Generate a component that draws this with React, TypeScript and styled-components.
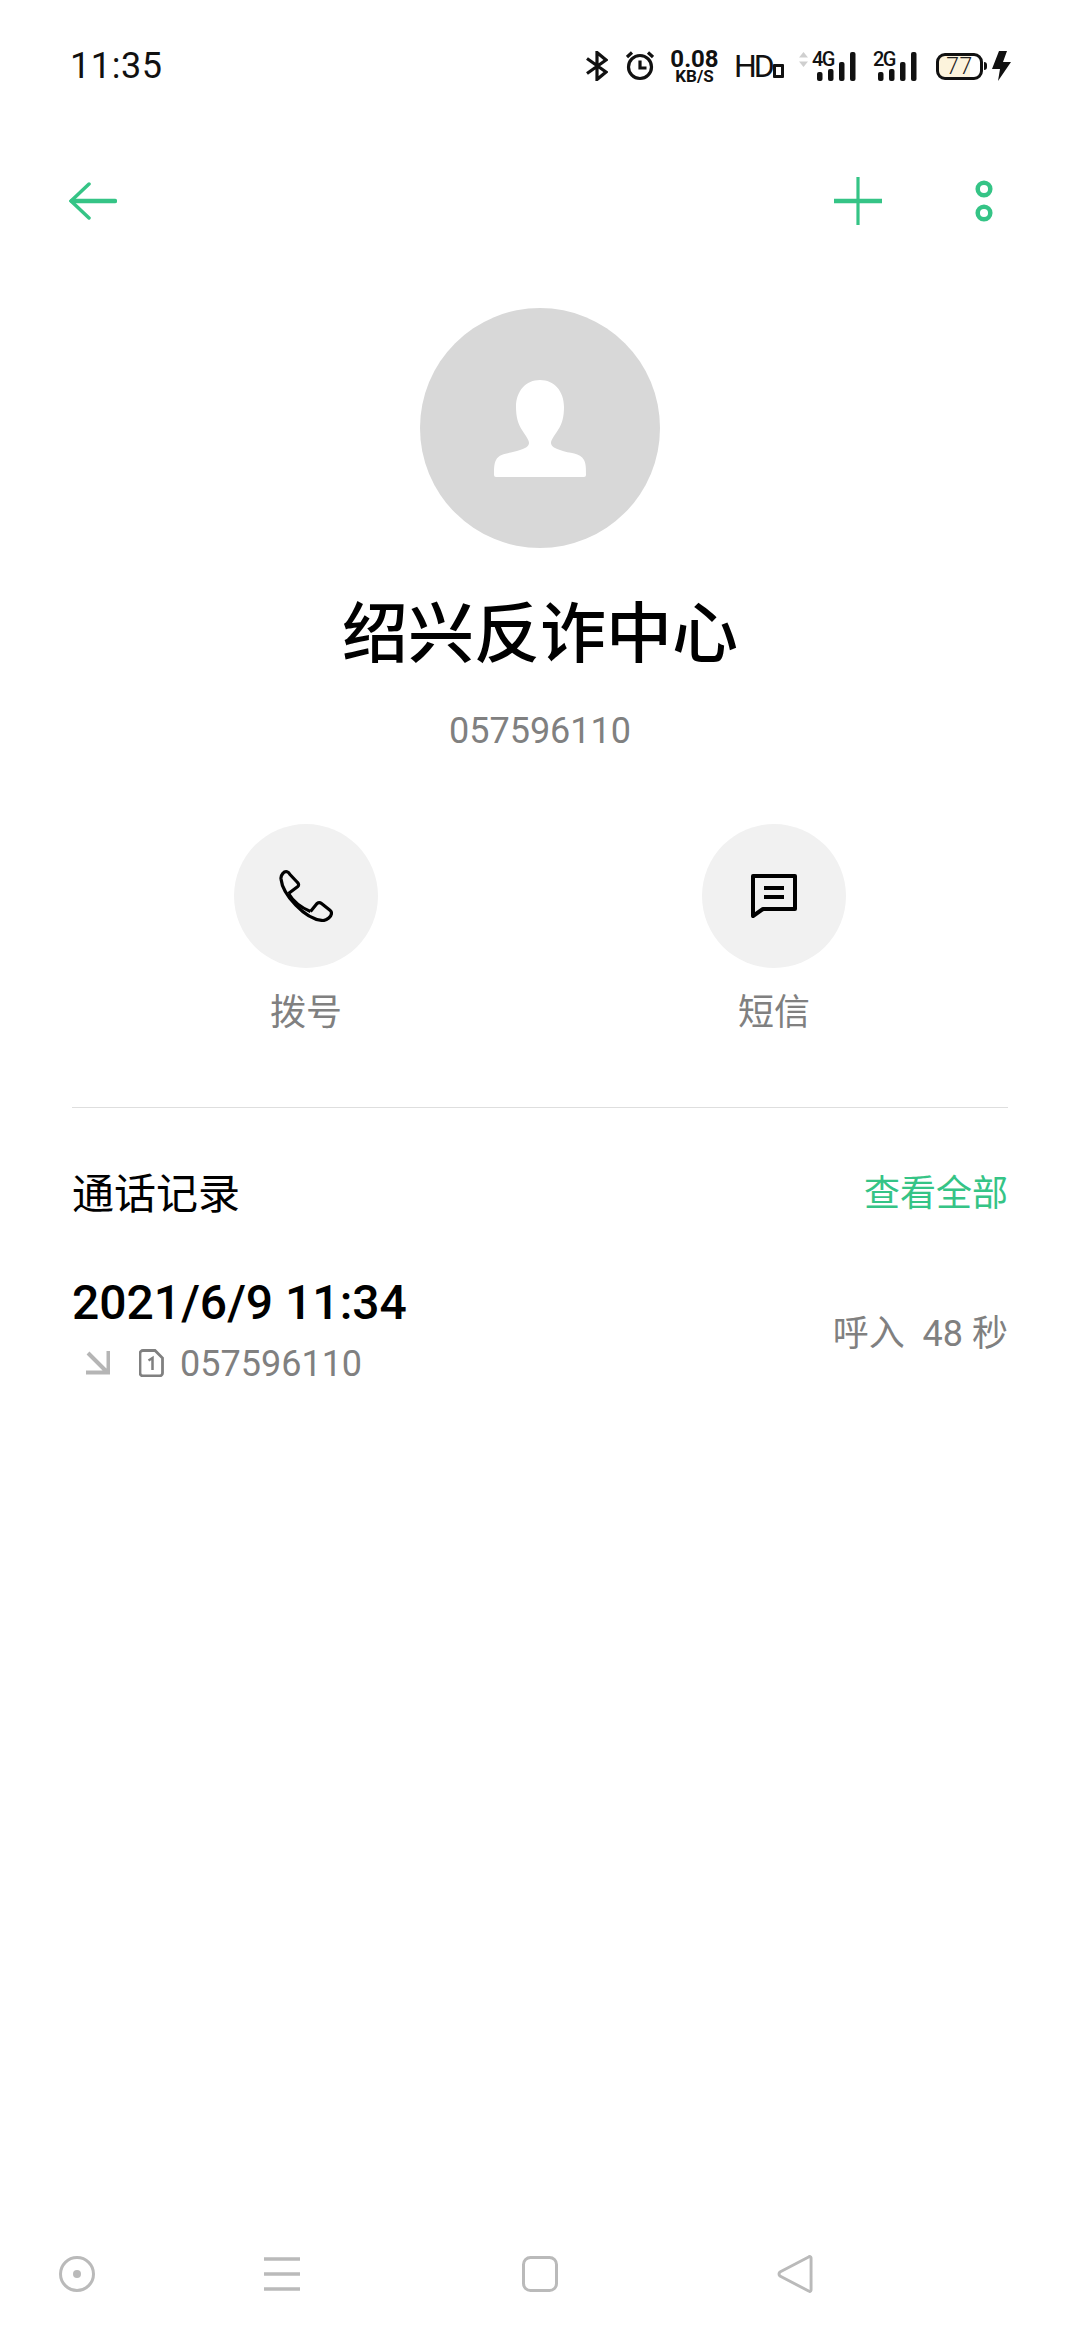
import styled, { createGlobalStyle } from 'styled-components'

const green = '#35c486'
const gray = '#808080'
const navGray = '#bababa'

const GlobalStyle = createGlobalStyle`
  html, body {
    margin: 0;
    padding: 0;
    background: #fff;
  }
  * {
    box-sizing: border-box;
  }
`

const Page = styled.div`
  display: flex;
  flex-direction: column;
  width: 1080px;
  height: 2340px;
  background: #fff;
  overflow: hidden;
  font-family: Roboto, 'Noto Sans CJK SC', sans-serif;
`

const StatusBar = styled.div`
  display: flex;
  align-items: center;
  justify-content: space-between;
  height: 132px;
  padding: 0 69px 0 70px;
`

const Time = styled.span`
  font-size: 36px;
  letter-spacing: 0.6px;
  color: #111;
`

const StatusIcons = styled.div`
  display: flex;
  align-items: center;
`

const StatusItem = styled.div<{ $gap: number }>`
  display: flex;
  margin-left: ${(p) => p.$gap}px;
`

const Speed = styled.div`
  display: flex;
  flex-direction: column;
  align-items: center;
  width: 47px;
  color: #111;
  font-weight: 700;
`

const SpeedValue = styled.span`
  font-size: 24px;
  line-height: 20px;
`

const SpeedUnit = styled.span`
  font-size: 17px;
  line-height: 15px;
`

const Hd = styled.div`
  display: flex;
  width: 48px;
`

const HdLabel = styled.span`
  margin-left: -2px;
  font-size: 32px;
  line-height: 32px;
  letter-spacing: -3px;
  color: #111;
`

const HdBox = styled.span`
  align-self: flex-end;
  width: 11px;
  height: 14px;
  margin: 0 0 4px auto;
  border: 3.5px solid #111;
  border-radius: 1px;
`

const SignalGroup = styled.div<{ $width: number }>`
  position: relative;
  display: flex;
  justify-content: flex-end;
  width: ${(p) => p.$width}px;
  height: 30px;
`

const SignalType = styled.span<{ $left: number }>`
  position: absolute;
  top: -1px;
  left: ${(p) => p.$left}px;
  font-size: 20px;
  line-height: 18px;
  font-weight: 500;
  letter-spacing: -1.5px;
  color: #111;
`

const DataArrows = styled.svg`
  position: absolute;
  top: 1px;
  left: 0;
`

const Battery = styled.div<{ $level: number }>`
  position: relative;
  display: flex;
  align-items: center;
  justify-content: center;
  width: 47px;
  height: 27px;
  border: 3.5px solid #111;
  border-radius: 9px;
  background: linear-gradient(
    to right,
    #fcf3dc ${(p) => p.$level}%,
    #fff ${(p) => p.$level}%
  );
  font-size: 23px;
  font-weight: 300;
  letter-spacing: 0.5px;
  color: #222;

  &::after {
    content: '';
    position: absolute;
    right: -7px;
    top: 6px;
    width: 3px;
    height: 8px;
    border-radius: 0 3px 3px 0;
    background: #111;
  }
`

const Toolbar = styled.div`
  display: flex;
  align-items: center;
  height: 138px;
  padding: 0 87px 0 69px;
`

const PlusButton = styled.svg`
  margin-left: auto;
`

const MoreButton = styled.svg`
  margin-left: 93px;
`

const Hero = styled.div`
  display: flex;
  flex-direction: column;
  align-items: center;
  padding-top: 38px;
`

const Avatar = styled.div`
  display: flex;
  align-items: center;
  justify-content: center;
  width: 240px;
  height: 240px;
  border-radius: 50%;
  background: #d8d8d8;
`

const Name = styled.div`
  margin-top: 45px;
  font-size: 66px;
  line-height: 84px;
  font-weight: 500;
  color: #000;
`

const Phone = styled.div`
  margin-top: 32px;
  font-size: 36px;
  line-height: 44px;
  color: ${gray};
`

const Actions = styled.div`
  display: flex;
  justify-content: center;
  gap: 324px;
  margin-top: 71px;
`

const Action = styled.div`
  display: flex;
  flex-direction: column;
  align-items: center;
  width: 144px;
`

const ActionCircle = styled.div`
  display: flex;
  align-items: center;
  justify-content: center;
  width: 144px;
  height: 144px;
  border-radius: 50%;
  background: #f1f1f1;
`

const ActionLabel = styled.span`
  margin-top: 23px;
  font-size: 36px;
  line-height: 44px;
  color: ${gray};
`

const Divider = styled.div`
  height: 1px;
  margin: 72px 72px 0;
  background: #dedede;
`

const Section = styled.div`
  display: flex;
  flex-direction: column;
  padding: 0 72px;
`

const SectionHeader = styled.div`
  display: flex;
  align-items: center;
  justify-content: space-between;
  height: 60px;
  margin-top: 52px;
`

const SectionTitle = styled.span`
  font-size: 42px;
  color: #000;
`

const SeeAll = styled.span`
  font-size: 36px;
  color: ${green};
`

const CallRow = styled.div`
  display: flex;
  align-items: center;
  justify-content: space-between;
  margin-top: 55px;
`

const CallInfo = styled.div`
  display: flex;
  flex-direction: column;
`

const CallDate = styled.span`
  font-size: 48px;
  line-height: 56px;
  font-weight: 500;
  color: #000;
`

const CallMeta = styled.div`
  display: flex;
  align-items: center;
  height: 44px;
  margin-top: 11px;
  padding-left: 14px;
  font-size: 36px;
  color: ${gray};

  svg {
    margin-bottom: 3px;
  }
`

const SimIcon = styled.svg`
  margin-left: 29px;
  margin-right: 16px;
`

const CallSummary = styled.span`
  margin-bottom: 2px;
  font-size: 36px;
  color: ${gray};
  white-space: pre;
`

const NavBar = styled.div`
  display: flex;
  align-items: center;
  height: 132px;
  margin-top: auto;
  padding-left: 59px;
`

const NavSlot = styled.div<{ $width: number }>`
  display: flex;
  width: ${(p) => p.$width}px;
`

function SignalBars() {
  return (
    <svg width="39" height="30" viewBox="0 0 39 30">
      {[9, 12, 19, 29].map((h, i) => (
        <rect key={i} x={i * 11} y={30 - h} width="5.5" height={h} rx="2" fill="#111" />
      ))}
    </svg>
  )
}

function App() {
  return (
    <Page>
      <GlobalStyle />
      <StatusBar>
        <Time>11:35</Time>
        <StatusIcons>
          <StatusItem $gap={0}>
            <svg width="22" height="30" viewBox="0 0 22 30" fill="none" stroke="#111" strokeWidth="3.2">
              <path d="M1 7.500L20 21l-9 7.500v-27L20 9 1 22.500" />
            </svg>
          </StatusItem>
          <StatusItem $gap={18}>
            <svg width="28" height="30" viewBox="0 0 28 30" fill="none" stroke="#111" strokeWidth="3.2">
              <circle cx="14" cy="16" r="11.500" />
              <path d="M14 9.500V17h6.500M1 6l5-4.500M27 6l-5-4.500" />
            </svg>
          </StatusItem>
          <StatusItem $gap={17}>
            <Speed>
              <SpeedValue>0.08</SpeedValue>
              <SpeedUnit>KB/S</SpeedUnit>
            </Speed>
          </StatusItem>
          <StatusItem $gap={18}>
            <Hd>
              <HdLabel>HD</HdLabel>
              <HdBox />
            </Hd>
          </StatusItem>
          <StatusItem $gap={15}>
            <SignalGroup $width={57}>
              <DataArrows width="9" height="15" viewBox="0 0 9 15">
                <path d="M4.500 0L9 5.500H0zM4.500 15L9 9.500H0z" fill="#cfcfcf" />
              </DataArrows>
              <SignalType $left={13}>4G</SignalType>
              <SignalBars />
            </SignalGroup>
          </StatusItem>
          <StatusItem $gap={17}>
            <SignalGroup $width={44}>
              <SignalType $left={0}>2G</SignalType>
              <SignalBars />
            </SignalGroup>
          </StatusItem>
          <StatusItem $gap={19}>
            <Battery $level={75}>77</Battery>
          </StatusItem>
          <StatusItem $gap={9}>
            <svg width="19" height="30" viewBox="0 0 19 30">
              <path d="M7 0L0 18H8L6 30 19 11H11L15 0z" fill="#111" />
            </svg>
          </StatusItem>
        </StatusIcons>
      </StatusBar>

      <Toolbar>
        <svg width="48" height="38" viewBox="0 0 48 38" fill="none" stroke={green} strokeLinecap="round">
          <path d="M46 19H3" strokeWidth="4.5" />
          <path d="M20 2L2 19l18 17" strokeWidth="3.5" />
        </svg>
        <PlusButton width="48" height="48" viewBox="0 0 48 48" fill="none" stroke={green}>
          <path d="M0 24h48" strokeWidth="4.5" />
          <path d="M24 0v48" strokeWidth="3.2" />
        </PlusButton>
        <MoreButton width="18" height="42" viewBox="0 0 18 42" fill="none" stroke={green} strokeWidth="4.5">
          <circle cx="9" cy="9" r="6.300" />
          <circle cx="9" cy="33" r="6.300" />
        </MoreButton>
      </Toolbar>

      <Hero>
        <Avatar>
          <svg width="92" height="97" viewBox="0 0 92 97" fill="#fff">
            <path d="M46 0C60 0 70 11 70 27C70 37 68 44 64 50C60 56 57 60 57 63C57 66 60 68 66 70C76 74 86 72 90 80C92 84 92 88 92 95Q92 97 90 97L2 97Q0 97 0 95C0 88 0 84 2 80C6 72 16 74 26 70C32 68 35 66 35 63C35 60 32 56 28 50C24 44 22 37 22 27C22 11 32 0 46 0Z" />
          </svg>
        </Avatar>
        <Name>绍兴反诈中心</Name>
        <Phone>057596110</Phone>
        <Actions>
          <Action>
            <ActionCircle>
              <svg width="54" height="52" viewBox="0 0 54 52" fill="none" stroke="#000" strokeWidth="3.200" strokeLinejoin="round">
                <path d="M2 9C1.500 5 5 1 8 1.800C9.500 2.200 10 3 11 4.500L18.500 12.500C20 14 20 15.500 18.500 16.800L9.500 23.500" />
                <path d="M2 9C3.500 24 26 50 44 50.500C48 50.500 52.500 46.500 52.500 43C52.500 42 52 41 51 40.200L42.500 33.500C41 32.300 39.500 32.300 38 33.500L31.500 41.500" />
                <path d="M9.500 23.500C14 31 23 38 31.500 41.500" />
              </svg>
            </ActionCircle>
            <ActionLabel>拨号</ActionLabel>
          </Action>
          <Action>
            <ActionCircle>
              <svg width="46" height="44" viewBox="0 0 46 44" fill="none" stroke="#000" strokeWidth="4">
                <path d="M2 2h42v33H12l-10 7z" strokeLinejoin="round" />
                <path d="M13 14h20M13 23h20" />
              </svg>
            </ActionCircle>
            <ActionLabel>短信</ActionLabel>
          </Action>
        </Actions>
      </Hero>

      <Divider />

      <Section>
        <SectionHeader>
          <SectionTitle>通话记录</SectionTitle>
          <SeeAll>查看全部</SeeAll>
        </SectionHeader>
        <CallRow>
          <CallInfo>
            <CallDate>2021/6/9 11:34</CallDate>
            <CallMeta>
              <svg width="24" height="24" viewBox="0 0 24 24" fill="none" stroke="#b5b5b5" strokeWidth="4">
                <path d="M2 2l19 19M0 21.500h22.500V0" />
              </svg>
              <SimIcon width="25" height="28" viewBox="0 0 25 28" fill="none" stroke={gray} strokeWidth="2.800">
                <path d="M4 1.500h12l7.500 7.500v15a3 3 0 0 1-3 3H4a3 3 0 0 1-3-3V4.500a3 3 0 0 1 3-3z" />
                <path d="M9.500 11.500l4-2.500V21" strokeWidth="2.500" />
              </SimIcon>
              057596110
            </CallMeta>
          </CallInfo>
          <CallSummary>呼入  48 秒</CallSummary>
        </CallRow>
      </Section>

      <NavBar>
        <NavSlot $width={205}>
          <svg width="36" height="36" viewBox="0 0 36 36" fill="none" stroke={navGray} strokeWidth="3">
            <circle cx="18" cy="18" r="16.500" />
            <circle cx="18" cy="18" r="4" fill={navGray} stroke="none" />
          </svg>
        </NavSlot>
        <NavSlot $width={258}>
          <svg width="36" height="36" viewBox="0 0 36 36" stroke={navGray} strokeWidth="3.500">
            <path d="M0 3h36M0 18h36M0 33h36" />
          </svg>
        </NavSlot>
        <NavSlot $width={255}>
          <svg width="36" height="36" viewBox="0 0 36 36" fill="none" stroke={navGray} strokeWidth="3">
            <rect x="1.500" y="1.500" width="33" height="33" rx="7" />
          </svg>
        </NavSlot>
        <NavSlot $width={36}>
          <svg width="37" height="40" viewBox="0 0 37 40" fill="none" stroke={navGray} strokeWidth="3" strokeLinejoin="round">
            <path d="M35 3.500v33a1.500 1.500 0 0 1-2.500 1L3 22a3 3 0 0 1 0-4L32.500 2.500a1.500 1.500 0 0 1 2.500 1z" />
          </svg>
        </NavSlot>
      </NavBar>
    </Page>
  )
}

export default App
